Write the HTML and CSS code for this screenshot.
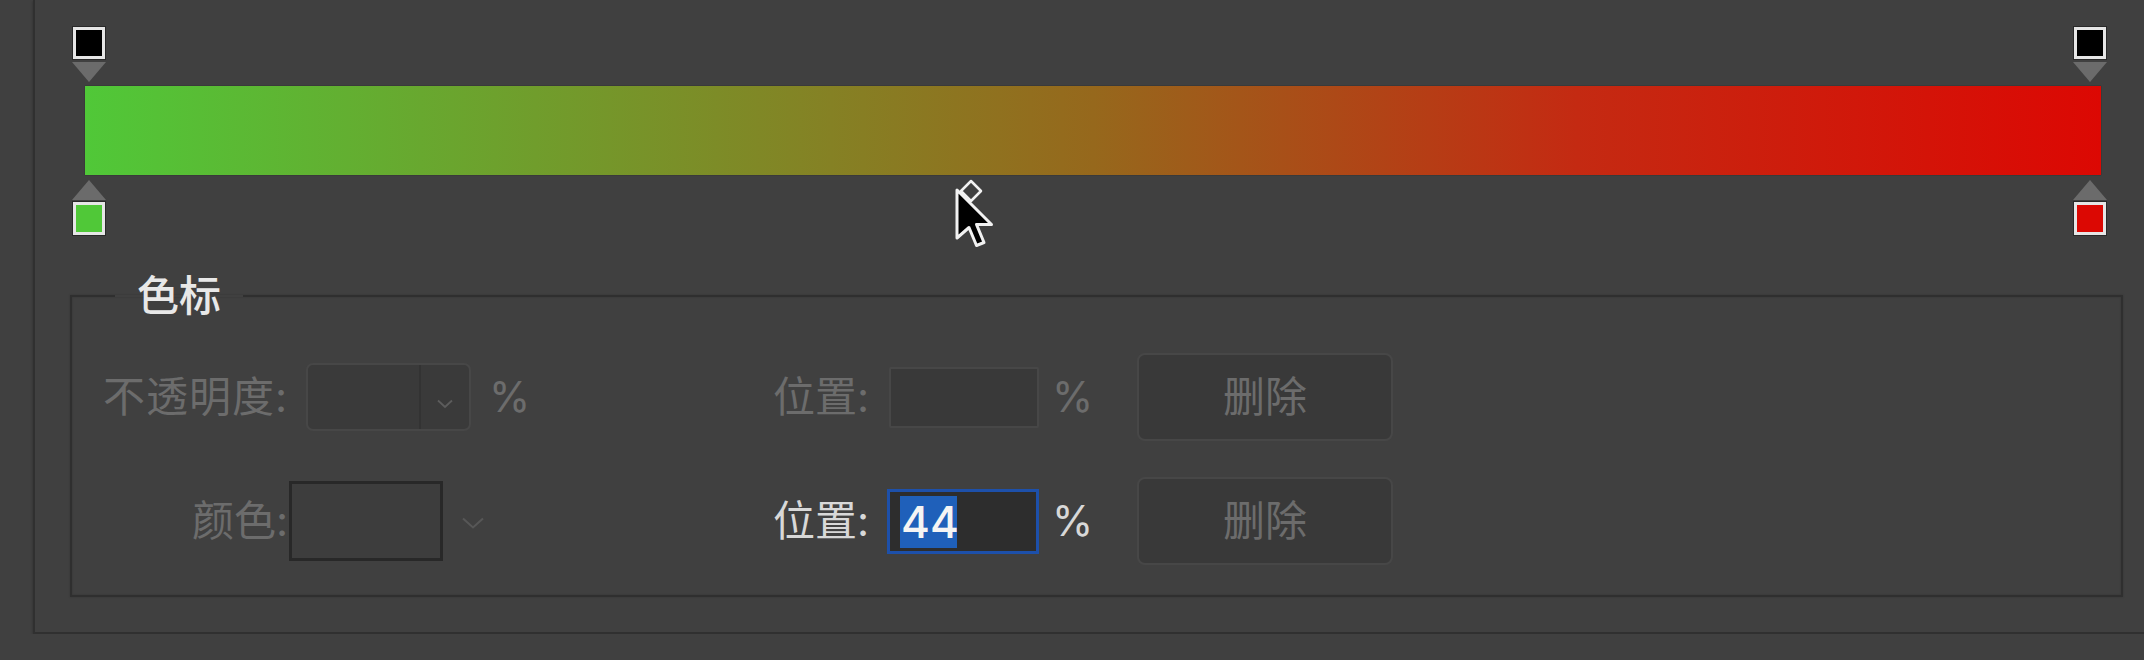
FILE: index.html
```html
<!DOCTYPE html>
<html lang="zh-CN">
<head>
<meta charset="utf-8">
<title>渐变编辑器 - 色标</title>
<link rel="stylesheet" href="styles.css">
</head>
<body>
<div class="panel">
  <div class="editor">
    <div class="stops stops-top">
      <div class="stop" style="left:0%"><span class="swatch swatch-black"></span><span class="tri tri-down"></span></div>
      <div class="stop" style="left:100%"><span class="swatch swatch-black"></span><span class="tri tri-down"></span></div>
    </div>
    <div class="bar"></div>
    <div class="stops stops-bottom">
      <div class="stop stop-b" style="left:0%"><span class="tri tri-up"></span><span class="swatch swatch-green"></span></div>
      <div class="stop stop-b" style="left:100%"><span class="tri tri-up"></span><span class="swatch swatch-red"></span></div>
    </div>
    <svg class="cursor" width="50" height="80" viewBox="0 0 50 80">
      <polygon points="21,6 31,16 21,26 11,16" fill="#404040" stroke="#f2f2f2" stroke-width="2.5" stroke-linejoin="round"/>
      <polygon points="7,15 7,63 19,52.5 26.5,70.5 34,67.5 26.5,49.5 41.5,49.5" fill="#000" stroke="#f2f2f2" stroke-width="3" stroke-linejoin="round"/>
    </svg>
  </div>

  <fieldset class="group">
    <legend class="group-title">色标</legend>
    <div class="grid">
      <span class="label dim label-right label-wide">不透明度:</span>
      <div class="cell">
        <div class="combo">
          <span class="combo-field"></span>
          <span class="combo-arrow">
            <svg width="16" height="10" viewBox="0 0 16 10"><polyline points="1,1.5 8,8 15,1.5" fill="none" stroke="#5c5c5c" stroke-width="1.8"/></svg>
          </span>
        </div>
      </div>
      <span class="pct pct-l dim">%</span>
      <span class="label dim">位置:</span>
      <div class="cell"><span class="field field-disabled"></span></div>
      <span class="pct pct-r dim">%</span>
      <button class="btn" type="button">删除</button>

      <span class="label dim label-right">颜色:</span>
      <div class="cell color-cell">
        <span class="color-box"></span>
        <svg class="color-chevron" width="22" height="12" viewBox="0 0 22 12"><polyline points="1,1.5 11,10.5 21,1.5" fill="none" stroke="#575757" stroke-width="2"/></svg>
      </div>
      <span></span>
      <span class="label bright">位置:</span>
      <div class="cell"><span class="field field-active"><span class="sel">44</span></span></div>
      <span class="pct pct-r bright">%</span>
      <button class="btn" type="button">删除</button>
    </div>
  </fieldset>
</div>
</body>
</html>
```

FILE: styles.css
```css
* { box-sizing: border-box; }

html, body {
  margin: 0;
  padding: 0;
  background: #404040;
}

body {
  font-family: "Inter", "Noto Sans CJK SC", sans-serif;
  overflow: hidden;
}

.panel {
  margin-left: 33px;
  border-left: 2px solid #303030;
  border-bottom: 2px solid #303030;
  box-shadow: -1px 1px 2px rgba(0, 0, 0, 0.15);
  display: flex;
  flex-direction: column;
}

.editor {
  position: relative;
  padding-top: 27px;
}

.stops {
  position: relative;
  height: 55px;
  margin-left: 54px;
  width: 2001px;
}

.stop {
  position: absolute;
  top: 0;
  transform: translateX(-50%);
  display: flex;
  flex-direction: column;
  align-items: center;
  gap: 3px;
}

.stop-b { gap: 2px; }

.swatch {
  display: block;
  width: 32px;
  height: 32px;
  border: 3px solid #e6e6e6;
  box-shadow: 0 0 0 1px rgba(0, 0, 0, 0.35);
}

.stop-b .swatch { height: 33px; }

.swatch-black { background: #000; }
.swatch-green { background: #50c838; }
.swatch-red { background: #dc0803; }

.tri {
  display: block;
  width: 0;
  height: 0;
  border-left: 17px solid transparent;
  border-right: 17px solid transparent;
}

.tri-down { border-top: 20px solid #6b6b6b; }
.tri-up { border-bottom: 20px solid #6b6b6b; }

.bar {
  margin-top: 4px;
  margin-left: 50px;
  width: 2016px;
  height: 89px;
  background: linear-gradient(to right, #50c838 0%, #858124 37%, #96681c 50%, #c42a12 74%, #dc0803 100%);
  box-shadow: 0 0 1px rgba(0, 0, 0, 0.5);
}

.stops-bottom { margin-top: 5px; }

.cursor {
  position: absolute;
  left: 915px;
  top: 175px;
}

.group {
  margin: 36px 21px 35px 35px;
  padding: 0 0 30px 0;
  border: 2px solid #2f2f2f;
  box-shadow: 0 0 2px rgba(0, 0, 0, 0.2), inset 0 0 2px rgba(0, 0, 0, 0.2);
  min-width: 0;
}

.group-title {
  margin-left: 43px;
  padding: 0 22px;
  font-size: 42px;
  line-height: 50px;
  font-weight: 500;
  color: #e8e8e8;
}

.grid {
  margin-top: 32px;
  display: grid;
  grid-template-columns: 216px 205px 280px 114px 152px 98px 256px;
  grid-auto-rows: 88px;
  row-gap: 36px;
  align-items: center;
}

.label {
  font-size: 42px;
  line-height: 50px;
  white-space: nowrap;
}

.label-right { justify-self: end; }
.label-wide { letter-spacing: 1px; }

.dim { color: #6c6c6c; }
.bright { color: #d8d8d8; }

.cell {
  display: flex;
  align-items: center;
}

.combo {
  margin-left: 18px;
  width: 165px;
  height: 68px;
  display: flex;
  border: 2px solid #474747;
  border-radius: 7px;
  background: #3a3a3a;
  overflow: hidden;
}

.combo-field {
  width: 113px;
  border-right: 2px solid #333;
}

.combo-arrow {
  flex: 1;
  display: flex;
  align-items: center;
  justify-content: center;
  padding-top: 14px;
}

.pct {
  font-size: 42px;
  line-height: 50px;
}

.pct-l { margin-left: -4px; }
.pct-r { padding-left: 13px; }

.color-cell { gap: 19px; }

.color-box {
  margin-left: 1px;
  width: 154px;
  height: 80px;
  border: 3px solid #282828;
  background: #3d3d3d;
}

.color-chevron { margin-top: 4px; }

.field {
  display: flex;
  align-items: center;
}

.field-disabled {
  margin-left: 2px;
  width: 150px;
  height: 61px;
  border: 2px solid #474747;
  border-radius: 2px;
  background: #393939;
}

.field-active {
  width: 152px;
  height: 65px;
  border: 3px solid #1d50aa;
  background: #2d2d2d;
  padding: 4px 0 3px 10px;
}

.sel {
  height: 100%;
  width: 57px;
  background: #1f60ba;
  color: #f4f4f4;
  font-size: 44px;
  line-height: 52px;
  font-weight: 500;
  padding-left: 1px;
  display: flex;
  align-items: center;
}

.btn {
  width: 256px;
  height: 88px;
  border: 2px solid #474747;
  border-radius: 8px;
  background: #393939;
  color: #6c6c6c;
  font-family: "Inter", "Noto Sans CJK SC", sans-serif;
  font-size: 42px;
  line-height: 50px;
  padding: 0;
}
```
